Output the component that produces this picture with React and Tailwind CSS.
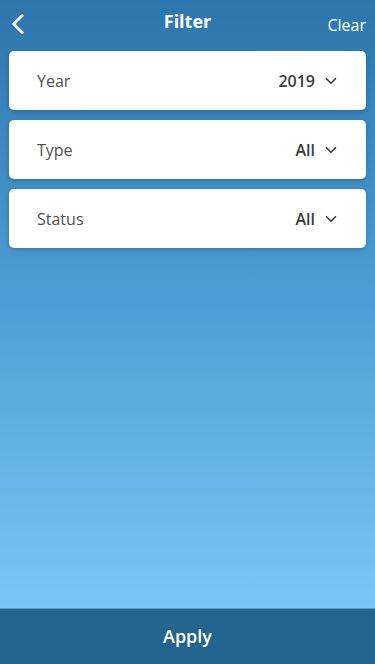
import { ChevronDown, ChevronLeft } from "lucide-react";

const filters = [
  { label: "Year", value: "2019" },
  { label: "Type", value: "All" },
  { label: "Status", value: "All" },
];

const FilterRow = ({ label, value }) => (
  <button className="flex h-[59px] w-full items-center justify-between rounded-[5px] bg-white pl-[28px] pr-[26px] shadow-[0_2px_4px_rgba(0,0,0,0.18)]">
    <span className="text-[16px] text-[#505050]">{label}</span>
    <span className="flex items-center gap-[7px]">
      <span className="text-[16px] font-semibold text-[#3c3c3c]">{value}</span>
      <ChevronDown size={18} strokeWidth={2.2} className="text-[#3c3c3c]" />
    </span>
  </button>
);

const App = () => {
  return (
    <div
      className="flex h-[664px] w-full flex-col overflow-hidden"
      style={{ fontFamily: '"Open Sans", sans-serif' }}
    >
      <div className="flex flex-1 flex-col bg-gradient-to-b from-[#2d75ad] via-[#4c9fd6] to-[#78c7f6] px-[9px]">
        <header className="relative flex h-[48px] items-center justify-between">
          <button className="-ml-[8px] text-white">
            <ChevronLeft size={34} strokeWidth={2} />
          </button>
          <h1 className="absolute left-1/2 top-[8px] -translate-x-1/2 text-[18px] font-bold text-white">
            Filter
          </h1>
          <button className="mt-[2px] text-[16px] text-white">Clear</button>
        </header>

        <div className="mt-[3px] flex flex-col gap-[10px]">
          {filters.map((f) => (
            <FilterRow key={f.label} label={f.label} value={f.value} />
          ))}
        </div>
      </div>

      <button className="h-[56px] w-full border-t border-[#5a9cc8] bg-[#22658f] text-[18px] font-semibold text-white">
        Apply
      </button>
    </div>
  );
};

export default App;
